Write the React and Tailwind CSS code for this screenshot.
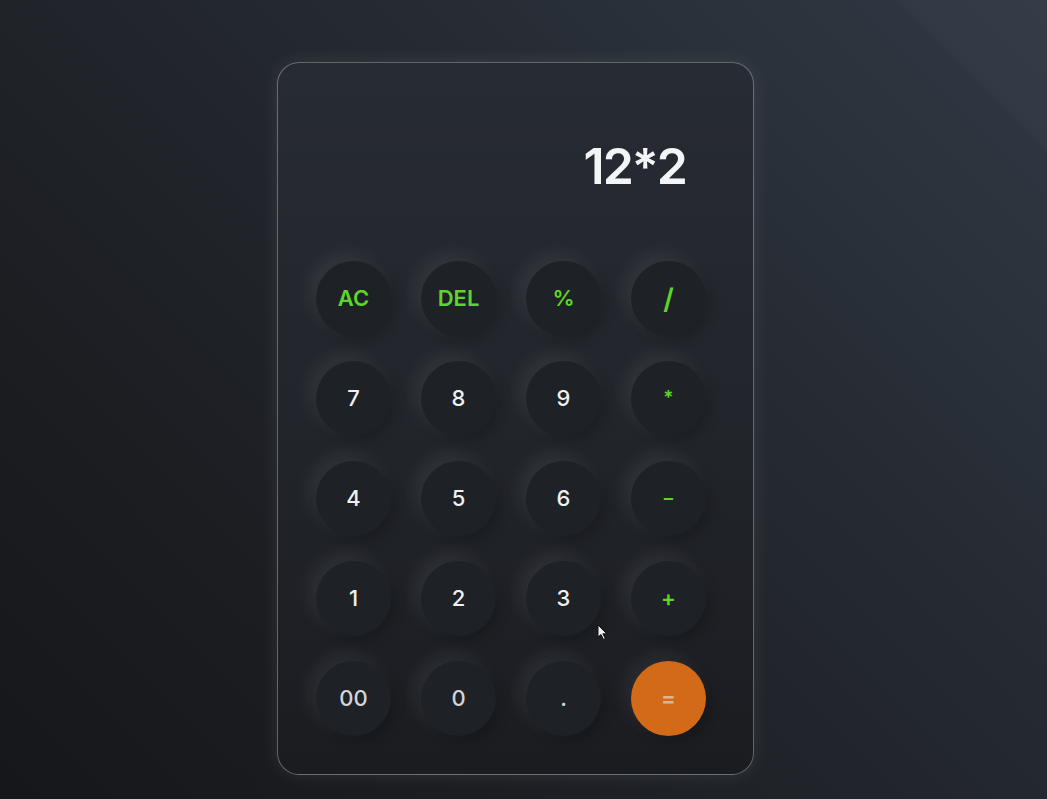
import React from "react";

const keys = [
  { l: "AC", t: "op" },
  { l: "DEL", t: "op" },
  { l: "%", t: "op" },
  { l: "/", t: "op", big: true },
  { l: "7" },
  { l: "8" },
  { l: "9" },
  { l: "*", t: "op", small: true },
  { l: "4" },
  { l: "5" },
  { l: "6" },
  { l: "−", t: "op", small: true },
  { l: "1" },
  { l: "2" },
  { l: "3" },
  { l: "+", t: "op" },
  { l: "00", t: "dim" },
  { l: "0", t: "dim" },
  { l: ".", t: "dim" },
  { l: "=", t: "eq" },
];

function Key({ k }) {
  if (k.t === "eq") {
    return (
      <button className="w-[75px] h-[75px] rounded-full bg-[#d26a17] text-[#dcb48f] text-[22px] font-semibold flex items-center justify-center shadow-[-6px_-6px_18px_rgba(255,255,255,0.07),5px_5px_12px_rgba(0,0,0,0.2)]">
        =
      </button>
    );
  }
  let color = "text-[#eef0f2] font-medium";
  if (k.t === "op") color = "text-[#5ed52a] font-semibold";
  if (k.t === "dim") color = "text-[#d2d5d9] font-medium";
  let size = "text-[22px]";
  if (k.big) size = "text-[28px]";
  if (k.small) size = "text-[19px]";
  return (
    <button
      className={`w-[75px] h-[75px] rounded-full bg-[#1e2126] flex items-center justify-center ${color} ${size} shadow-[-7px_-7px_18px_rgba(255,255,255,0.075),5px_5px_12px_rgba(0,0,0,0.18)]`}
    >
      {k.l}
    </button>
  );
}

export default function App() {
  return (
    <div
      className="relative w-[1047px] h-[799px] overflow-hidden bg-[linear-gradient(225deg,#313844_0%,#2b323b_18%,#23272e_45%,#1b1d21_75%,#15171a_100%)]"
      style={{ fontFamily: "Inter, 'Liberation Sans', sans-serif" }}
    >
      <div className="absolute inset-0 bg-[linear-gradient(225deg,rgba(255,255,255,0.02)_0%,rgba(255,255,255,0.02)_8%,transparent_8.3%)]" />
      <div className="relative flex pl-[277px] pt-[62px]">
        <div className="w-[477px] h-[713px] rounded-[22px] border border-[rgba(255,255,255,0.32)] bg-[linear-gradient(180deg,#272b33_0%,#22252b_50%,#1a1c20_100%)] shadow-[0_0_18px_rgba(255,255,255,0.09)] pt-[78px] pl-[38px] pr-[67px]">
          <div className="h-[52px] text-right text-[50px] leading-none font-semibold text-[#f4f5f7] tracking-[-2px]">
            12*2
          </div>
          <div className="mt-[68px] grid grid-cols-[repeat(4,75px)] gap-x-[30px] gap-y-[25px]">
            {keys.map((k, i) => (
              <Key key={i} k={k} />
            ))}
          </div>
        </div>
      </div>
      <svg
        className="absolute left-[597px] top-[624px]"
        width="12"
        height="17"
        viewBox="0 0 12 17"
      >
        <path
          d="M1 1 L1 13 L4 10.5 L6.5 15.5 L8.3 14.6 L5.9 9.8 L9.8 9.8 Z"
          fill="#f2f2f2"
          stroke="#111"
          strokeWidth="1"
        />
      </svg>
    </div>
  );
}
